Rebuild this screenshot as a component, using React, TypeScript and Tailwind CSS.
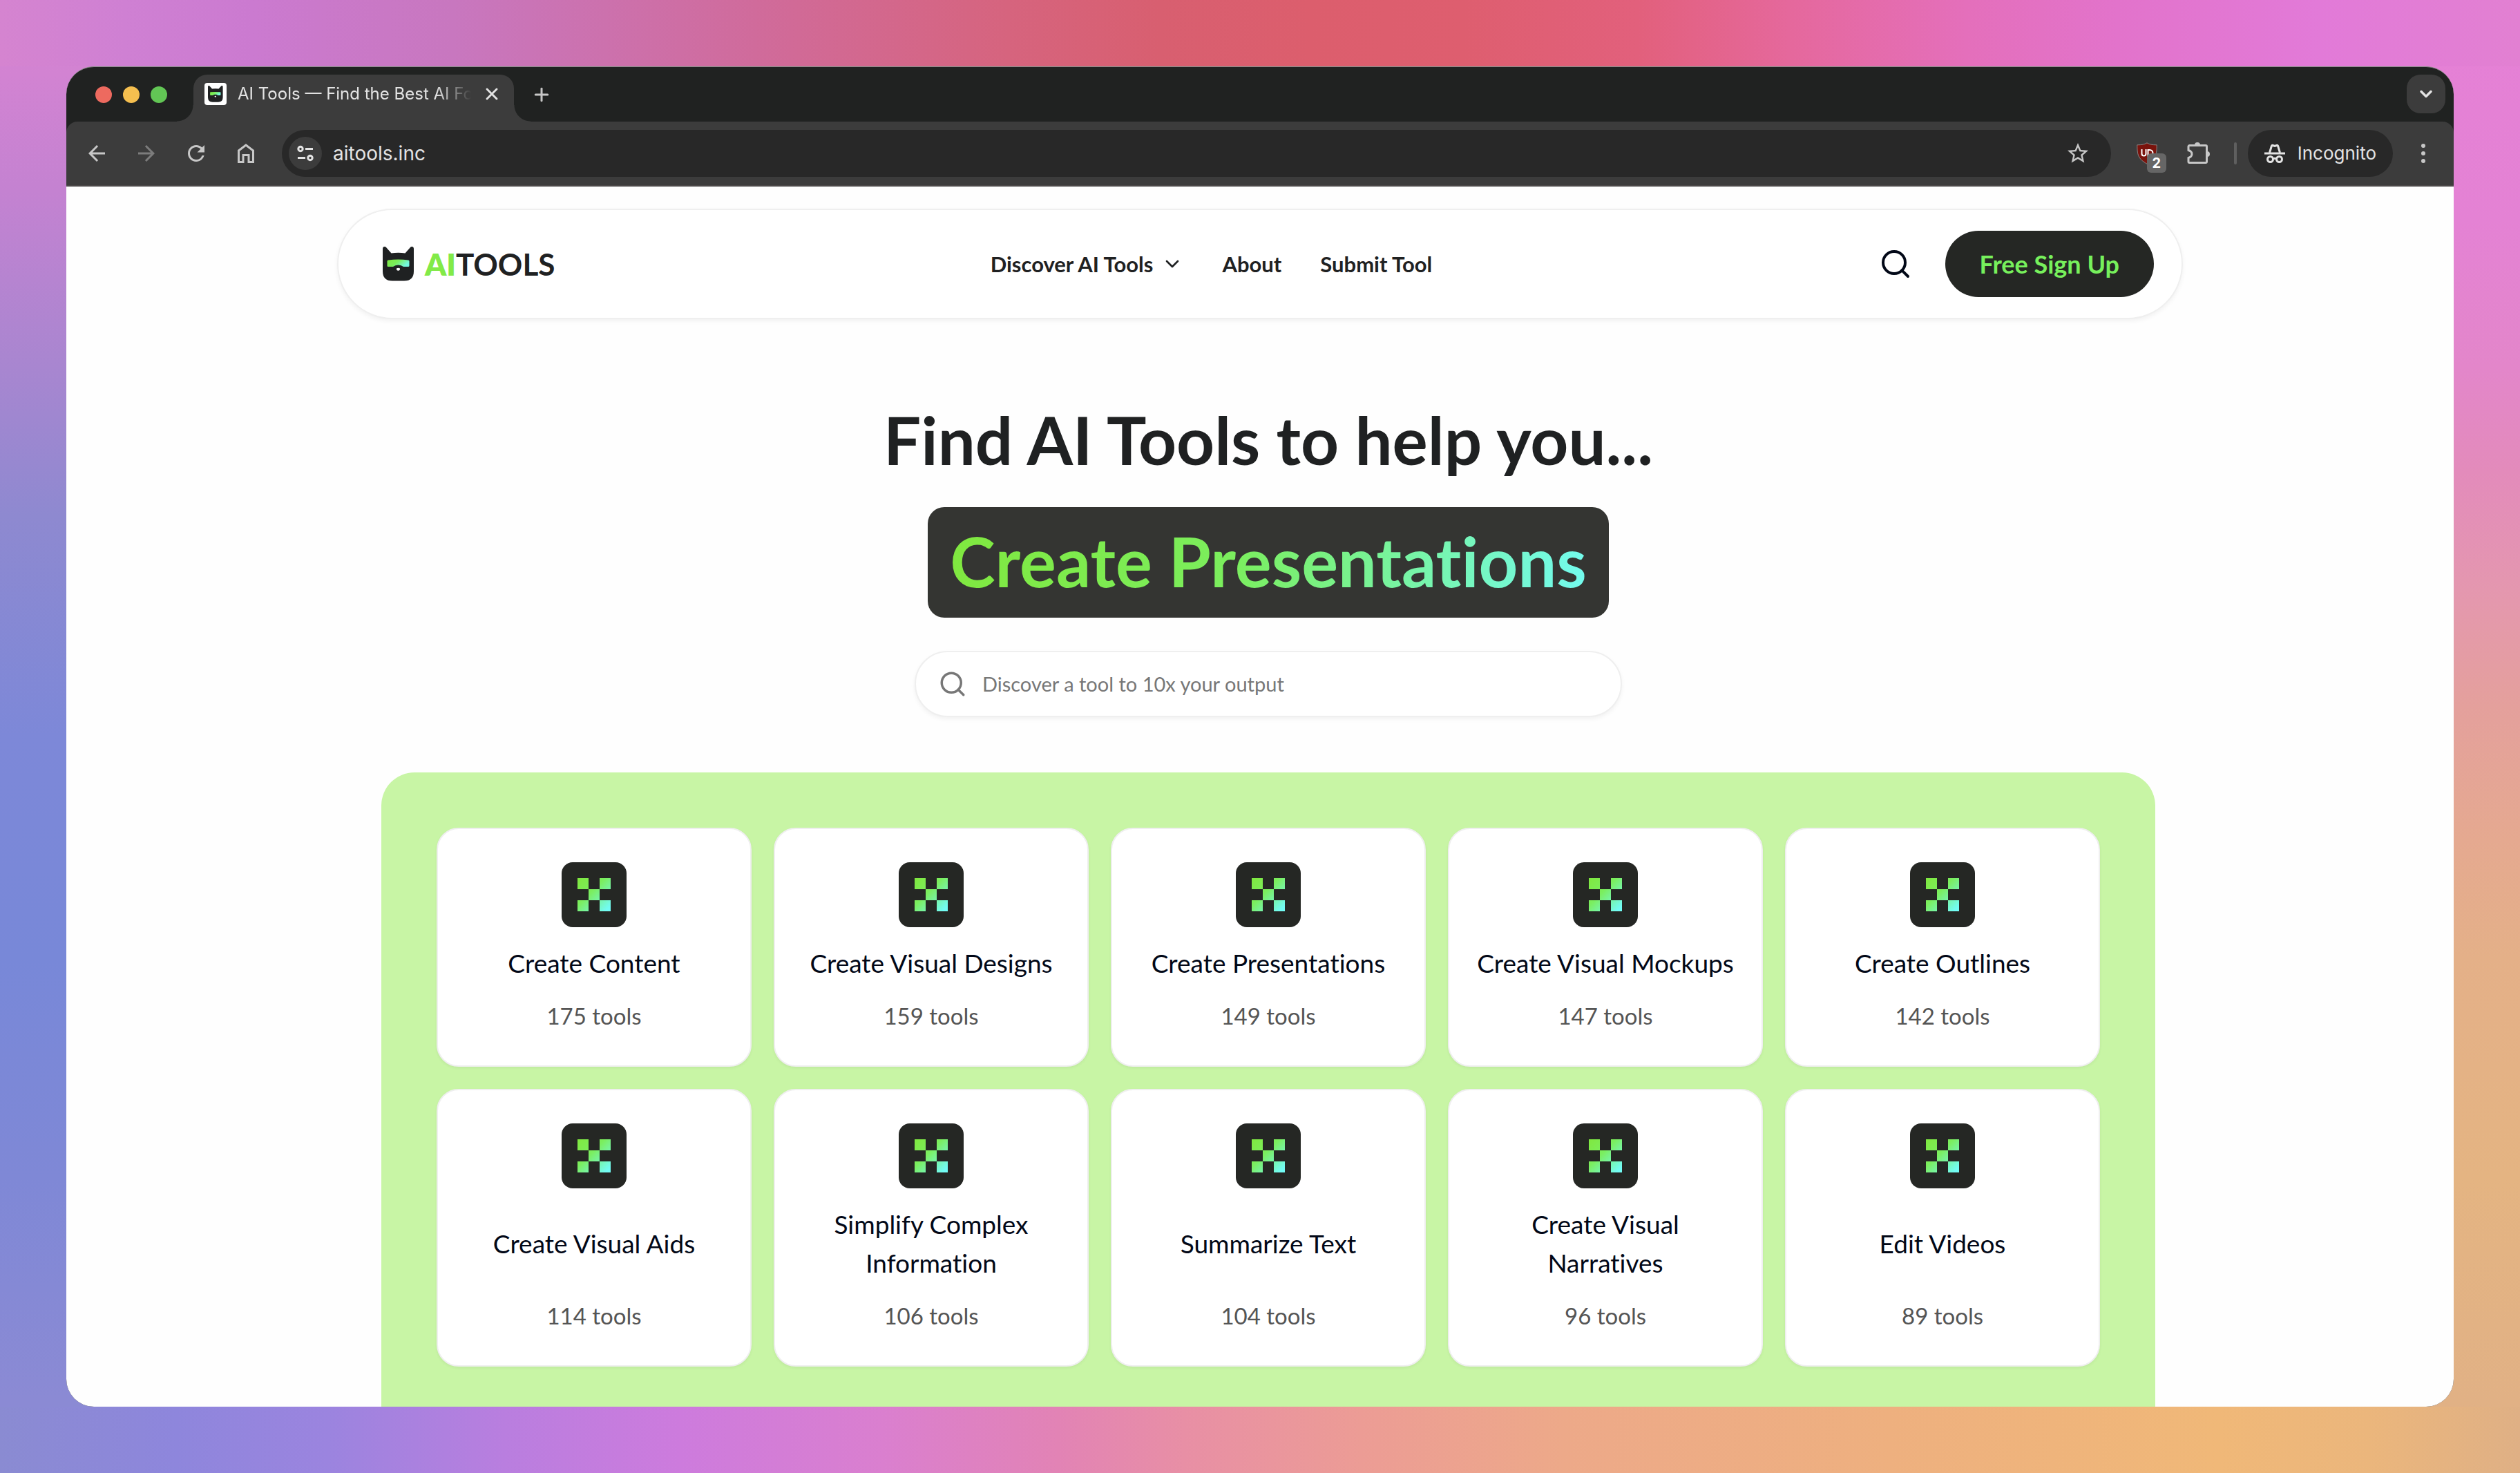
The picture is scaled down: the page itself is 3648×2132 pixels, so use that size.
import React from "react";
import { ChevronDown, Plus, Search, X } from "lucide-react";
import { MdArrowBack, MdArrowForward, MdRefresh, MdStarBorder } from "react-icons/md";

interface Category {
  name: string;
  count: number;
}

const categories: Category[] = [
  { name: "Create Content", count: 175 },
  { name: "Create Visual Designs", count: 159 },
  { name: "Create Presentations", count: 149 },
  { name: "Create Visual Mockups", count: 147 },
  { name: "Create Outlines", count: 142 },
  { name: "Create Visual Aids", count: 114 },
  { name: "Simplify Complex Information", count: 106 },
  { name: "Summarize Text", count: 104 },
  { name: "Create Visual Narratives", count: 96 },
  { name: "Edit Videos", count: 89 },
];

const CatLogo: React.FC<{ id: string; className?: string }> = ({ id, className }) => (
  <svg viewBox="0 0 45 50" className={className} aria-hidden="true">
    <defs>
      <linearGradient id={id} x1="0" y1="0" x2="1" y2="0.4">
        <stop offset="0" stopColor="#7fe843" />
        <stop offset="0.5" stopColor="#7aee5a" />
        <stop offset="1" stopColor="#74f8e0" />
      </linearGradient>
    </defs>
    <path
      d="M0 3C0 0 3-1 5 1l7.500 8.500Q22.500 8 32.500 9.500L40 1c2-2 5-1 5 2v32.500Q45 49.500 31 49.500H14Q0 49.500 0 35.500Z"
      fill="#1f2122"
    />
    <path
      d="M8 19.500Q22.500 17.500 37 19.500q1.500.2 1.500 1.500v6.500q0 1.500-1.500 1.500h-7q-3-2.500-7.500-2.500T15 29H8q-1.500 0-1.500-1.500V21q0-1.300 1.500-1.500Z"
      fill={`url(#${id})`}
    />
    <path d="M20 31.500q2.500-1.500 5 0 .3 3.200-2.500 3.200T20 31.500Z" fill="#fff" />
  </svg>
);

const PixelIcon: React.FC<{ id: string }> = ({ id }) => (
  <span className="flex size-[94px] items-center justify-center rounded-2xl bg-[#252724]">
    <svg viewBox="0 0 6 6" className="size-12" aria-hidden="true" shapeRendering="crispEdges">
      <defs>
        <linearGradient id={id} gradientUnits="userSpaceOnUse" x1="0" y1="0" x2="5.5" y2="5.5">
          <stop offset="0" stopColor="#80e83f" />
          <stop offset="0.45" stopColor="#7bee5e" />
          <stop offset="1" stopColor="#72fbf4" />
        </linearGradient>
      </defs>
      <path d="M0 0h2v2H0zM4 0h2v2H4zM2 2h2v2H2zM0 4h2v2H0zM4 4h2v2H4z" fill={`url(#${id})`} />
    </svg>
  </span>
);

const HomeIcon = () => (
  <svg viewBox="0 0 36 36" className="size-9" fill="none" stroke="currentColor" strokeWidth="3" aria-hidden="true">
    <path d="M7.500 14 18 6l10.500 8v16.500H22v-10h-8v10H7.500Z" />
  </svg>
);

const SiteInfoIcon = () => (
  <svg viewBox="0 0 24 24" className="size-6" fill="none" stroke="currentColor" strokeWidth="3" aria-hidden="true">
    <circle cx="5" cy="5.500" r="3.200" />
    <path d="M12 5.500h11M1 18.500h11" />
    <circle cx="19" cy="18.500" r="3.200" />
  </svg>
);

const PuzzleIcon = () => (
  <svg viewBox="0 0 36 36" className="size-9" aria-hidden="true">
    <path
      d="M5 6.500h24a1.500 1.500 0 0 1 1.500 1.500v22a1.500 1.500 0 0 1-1.500 1.500H5.500A1.500 1.500 0 0 1 4 30v-5.500q5-1.500 5-5.500t-5-5.500V8a1.500 1.500 0 0 1 1.500-1.500Z"
      fill="none"
      stroke="currentColor"
      strokeWidth="3"
    />
    <path d="M13 6a4 4 0 0 1 8 0ZM31 15a4 4 0 0 1 0 8Z" fill="currentColor" />
  </svg>
);

const IncognitoIcon = () => (
  <svg viewBox="0 0 30 28" className="h-7 w-[30px]" fill="none" stroke="currentColor" strokeWidth="3" aria-hidden="true">
    <path d="M0 14h30" />
    <path d="m7.500 13 2.800-9.500q.7-1.500 2-1l2.700 1 2.700-1q1.300-.5 2 1l2.800 9.500" />
    <circle cx="8.500" cy="22.500" r="4" />
    <circle cx="21.500" cy="22.500" r="4" />
    <path d="M12 22q3-1.500 6 0" />
  </svg>
);

const ShieldIcon = () => (
  <svg viewBox="0 0 30 32" className="h-8 w-[30px]" aria-hidden="true">
    <path
      d="M15 .8c3 2.200 8 3 14.200 3 0 14-1.200 20-14.200 27.400C2 23.800.8 17.800.8 3.800 7 3.800 12 3 15 .8Z"
      fill="#7a130c"
      stroke="#8b8585"
      strokeWidth="1"
    />
    <path d="M7.500 10v6.500a3 3 0 0 0 6 0V10M16.500 20v-9h2.500a4.500 4.500 0 0 1 0 9Z" fill="none" stroke="#fff" strokeWidth="2" />
  </svg>
);

const TabStrip = () => (
  <div className="flex h-[79px] items-end pr-3 pl-[42px]">
    <div className="flex h-full items-center gap-4">
      <button aria-label="Close window" className="size-6 rounded-full bg-[#ed6a5f]" />
      <button aria-label="Minimize window" className="size-6 rounded-full bg-[#f5bf4f]" />
      <button aria-label="Zoom window" className="size-6 rounded-full bg-[#62c655]" />
    </div>
    <div className="relative ml-[38px] flex h-[68px] w-[464px] items-center rounded-t-[20px] bg-[#3c3c3c] pr-[18px] pb-3 pl-4">
      {/* flared feet of the active tab */}
      <span className="absolute bottom-0 -left-6 size-6 bg-[radial-gradient(circle_at_0_0,transparent_23px,#3c3c3c_24px)]" />
      <span className="absolute -right-6 bottom-0 size-6 bg-[radial-gradient(circle_at_100%_0,transparent_23px,#3c3c3c_24px)]" />
      <span className="flex size-8 shrink-0 items-center justify-center rounded bg-white">
        <CatLogo id="favicon" className="h-6" />
      </span>
      <span className="ml-4 min-w-0 flex-1 overflow-hidden mask-r-from-85% mask-r-to-100% text-[24px] leading-8 whitespace-nowrap text-[#e3e3e3]">
        AI Tools — Find the Best AI Fo
      </span>
      <button aria-label="Close tab" className="ml-4 text-[#e3e3e3]">
        <X size={28} strokeWidth={2.5} />
      </button>
    </div>
    <button aria-label="New tab" className="mb-6 ml-[25px] text-[#c7c7c7]">
      <Plus size={30} strokeWidth={2.4} />
    </button>
    <button
      aria-label="Search tabs"
      className="mb-3 ml-auto flex size-14 items-center justify-center rounded-[20px] bg-[#3c3c3c] text-[#e3e3e3]"
    >
      <ChevronDown size={28} strokeWidth={3} />
    </button>
  </div>
);

const Toolbar = () => (
  <div className="flex h-[94px] items-center rounded-t-2xl border-b-2 border-[#4b4848] bg-[#3c3c3c] pr-[34px] pl-[26px] text-[#c7c7c7]">
    <div className="flex gap-9">
      <button aria-label="Back">
        <MdArrowBack size={36} />
      </button>
      <button aria-label="Forward" className="text-[#7c7c7c]">
        <MdArrowForward size={36} />
      </button>
      <button aria-label="Reload">
        <MdRefresh size={36} />
      </button>
      <button aria-label="Home">
        <HomeIcon />
      </button>
    </div>
    <div className="ml-[34px] flex h-[68px] flex-1 items-center rounded-full bg-[#282828] pr-[30px] pl-[10px]">
      <button aria-label="Site information" className="flex size-12 items-center justify-center rounded-full bg-[#3c3c3c] text-[#e3e3e3]">
        <SiteInfoIcon />
      </button>
      <input
        type="text"
        aria-label="Address"
        defaultValue="aitools.inc"
        className="ml-4 min-w-0 flex-1 bg-transparent text-[28px] leading-9 text-[#e3e3e3] outline-none"
      />
      <button aria-label="Bookmark this page">
        <MdStarBorder size={36} />
      </button>
    </div>
    <button aria-label="Content blocker" className="relative ml-[37px]">
      <ShieldIcon />
      <span className="absolute top-4 left-[15px] flex size-7 items-center justify-center rounded-md bg-[#666] text-[20px] leading-6 font-bold text-white">
        2
      </span>
    </button>
    <button aria-label="Extensions" className="ml-[41px]">
      <PuzzleIcon />
    </button>
    <span className="ml-[34px] h-8 w-1 rounded-full bg-[#5f5f5f]" />
    <button className="ml-4 flex h-[68px] items-center gap-[18px] rounded-full bg-[#282828] px-6 text-[26px] leading-8 text-[#e3e3e3]">
      <IncognitoIcon />
      Incognito
    </button>
    <button aria-label="Menu" className="ml-[34px] flex w-5 flex-col items-center gap-[5px]">
      <span className="size-[6px] rounded-full bg-[#c7c7c7]" />
      <span className="size-[6px] rounded-full bg-[#c7c7c7]" />
      <span className="size-[6px] rounded-full bg-[#c7c7c7]" />
    </button>
  </div>
);

const SiteHeader = () => (
  <header className="mx-auto mt-8 flex w-full max-w-[2672px] items-center justify-between rounded-full border-2 border-[#efefef] bg-white py-[30px] pr-10 pl-16 shadow-[0_3px_6px_rgba(0,0,0,0.05)]">
    <a href="#" className="flex items-center gap-4 text-[44px] leading-[50px] font-bold text-[#1f2122]">
      <CatLogo id="brand" className="h-[50px]" />
      <span>
        <span className="font-extrabold text-[#82ea48]">AI</span>TOOLS
      </span>
    </a>
    <nav className="flex items-center gap-14 text-[31px] leading-10 font-bold text-[#1f2122]">
      <button className="flex items-center gap-3">
        Discover AI Tools
        <ChevronDown size={32} strokeWidth={2} />
      </button>
      <a href="#">About</a>
      <a href="#">Submit Tool</a>
    </nav>
    <div className="flex items-center gap-8">
      <button aria-label="Search" className="p-4 text-[#020817]">
        <Search size={48} strokeWidth={2} />
      </button>
      <button className="h-24 rounded-full bg-[#252724] px-[50px] text-[36px] leading-12 font-bold text-[#77f05c]">
        Free Sign Up
      </button>
    </div>
  </header>
);

const CategoryCard: React.FC<{ category: Category; index: number }> = ({ category, index }) => (
  <a
    href="#"
    className="flex flex-col items-center gap-6 rounded-[32px] border-2 border-[#efefef] bg-white px-10 py-12 text-center shadow-[0_2px_4px_rgba(0,0,0,0.05)]"
  >
    <PixelIcon id={`pixel-${index}`} />
    <h2 className="flex flex-1 items-center text-[37px] leading-14 text-[#020817]">{category.name}</h2>
    <p className="text-[33px] leading-12 text-[#555]">{category.count} tools</p>
  </a>
);

export default function App() {
  return (
    <div className="h-screen bg-[#d9a0b0] [background-image:linear-gradient(90deg,#d584d0,#cf80d3_5%,#cb7ad0_10%,#c877bf_18%,#d06b9b_30%,#d6647e_40%,#d85f70_46%,#dc5e6d_52%,#de5e6f_58%,#e2607c_65%,#e5689c_71%,#e46fbb_78%,#e273cb_84%,#e27ad8_92%,#e280d2),linear-gradient(90deg,#8a8bd2,#8e86dc_7%,#9b84df_13%,#b97edf_20%,#cd7bdd_27%,#da7fcf_35%,#e283b5_42%,#e88fa5_47%,#ec9c95_54%,#eda989_62%,#eeb07f_75%,#f0b878_88%,#ebb67c_94%,#dfb085),linear-gradient(180deg,#d584d0,#d283d2_5%,#c482d1_13%,#a886d0_25%,#8e89d0_35%,#7d88d8_50%,#7888d8_65%,#7f88d6_80%,#8b8ad4_95%),linear-gradient(180deg,#e580d6,#e482d4_15%,#e386ca_25%,#e38bbb_32%,#e497af_40%,#e4a09c_48%,#e5a990_57%,#e4b088_65%,#e4b482_80%,#e0b086)] [background-position:top,bottom,left,right] bg-no-repeat [background-size:100%_96px,100%_96px,50%_100%,50%_100%] p-24">
      <div className="flex h-full flex-col overflow-hidden rounded-[40px] border-t border-[#8b8f8b] bg-[#202221] font-['Inter',sans-serif]">
        <TabStrip />
        <Toolbar />
        <div className="flex min-h-0 flex-1 flex-col overflow-hidden bg-[#fefefe] font-['Lato',sans-serif] [font-variant-ligatures:none]">
          <SiteHeader />
          <main className="flex flex-col items-center pl-6">
            <h1 className="mt-[126px] flex flex-col items-center text-[96px] leading-24 font-bold text-[#1f2122]">
              Find AI Tools to help you...
              <span className="mt-[50px] rounded-3xl bg-[#343532] px-8 pt-[30px] pb-[34px] text-[99px] leading-24">
                <span className="bg-linear-[100deg,#80e83f,#7bee5e_45%,#73fbf0] bg-clip-text text-transparent">
                  Create Presentations
                </span>
              </span>
            </h1>
            <form className="mt-12 flex h-24 w-full max-w-[1024px] items-center gap-[22px] rounded-full border-2 border-[#efefef] bg-white px-8 shadow-[0_3px_6px_rgba(0,0,0,0.05)]">
              <Search size={42} strokeWidth={2} className="text-[#777]" />
              <input
                type="text"
                aria-label="Search tools"
                placeholder="Discover a tool to 10x your output"
                className="min-w-0 flex-1 bg-transparent text-[29px] leading-10 outline-none placeholder:text-[#777]"
              />
            </form>
            <section className="mt-20 grid w-full max-w-[2568px] grid-cols-5 gap-8 rounded-t-[48px] bg-[#c8f5a5] p-20">
              {categories.map((category, index) => (
                <CategoryCard key={category.name} category={category} index={index} />
              ))}
            </section>
          </main>
        </div>
      </div>
    </div>
  );
}
